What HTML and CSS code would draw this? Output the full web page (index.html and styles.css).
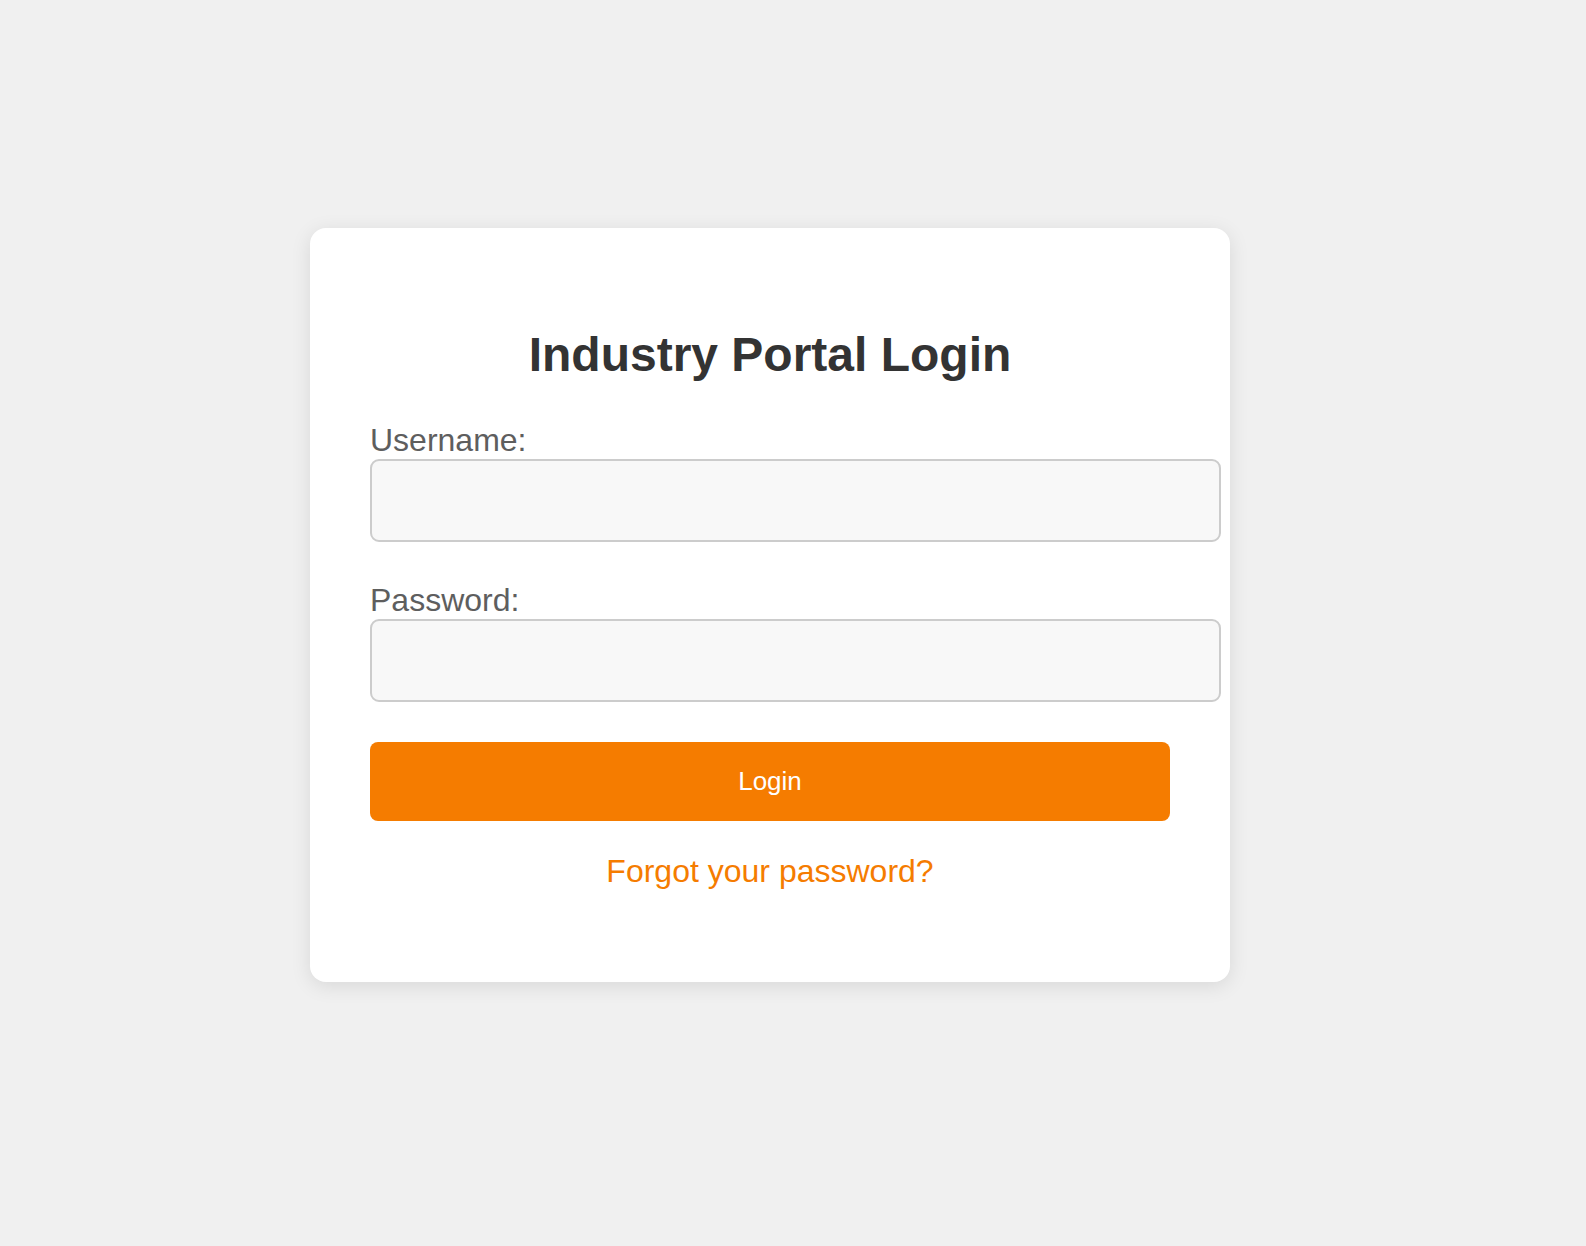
FILE: index.html
```html
<!DOCTYPE html>
<html lang="en">
<head>
<meta charset="utf-8">
<title>Industry Portal Login</title>
<link rel="stylesheet" href="styles.css">
</head>
<body>
<div class="page">
  <div class="login-card">
    <h2 class="title">Industry Portal Login</h2>
    <form class="login-form">
      <label class="field-label" for="username">Username:</label>
      <input class="field-input" type="text" id="username">
      <label class="field-label" for="password">Password:</label>
      <input class="field-input" type="password" id="password">
      <button class="login-btn" type="button">Login</button>
    </form>
    <p class="forgot"><a href="#" class="forgot-link">Forgot your password?</a></p>
  </div>
</div>
</body>
</html>
```
FILE: styles.css
```css
html, body {
  margin: 0;
  padding: 0;
  background: #f0f0f0;
  font-family: "Liberation Sans", Arial, sans-serif;
}

.page {
  display: flex;
  justify-content: center;
  align-items: flex-start;
  padding: 228px 46px 0 0;
  min-height: 1018px;
}

.login-card {
  width: 800px;
  padding: 60px;
  background: #ffffff;
  border-radius: 16px;
  box-shadow: 0 4px 20px rgba(0, 0, 0, 0.1);
}

.title {
  margin: 38px 0 39px;
  font-size: 48px;
  line-height: 57px;
  font-weight: bold;
  color: #333333;
  text-align: center;
}

.login-form {
  display: block;
}

.field-label {
  display: block;
  font-size: 32px;
  color: #5e5e5e;
  line-height: 37px;
}

.field-input {
  display: block;
  width: 100%;
  height: 31px;
  padding: 24px 23.5px;
  margin: 0 0 40px;
  border: 2px solid #cccccc;
  border-radius: 9px;
  background: #f8f8f8;
  font-family: "Liberation Sans", Arial, sans-serif;
  font-size: 25.6px;
  outline: none;
}

.login-btn {
  display: block;
  width: 100%;
  margin-top: 40px;
  padding: 0;
  height: 79px;
  border: none;
  border-radius: 8px;
  background: #f57c00;
  color: #ffffff;
  font-family: "Liberation Sans", Arial, sans-serif;
  font-size: 26px;
  cursor: pointer;
}

.forgot {
  margin: 32px 0 32px;
  text-align: center;
  font-size: 32px;
  line-height: 37px;
}

.forgot-link {
  color: #f57c00;
  text-decoration: none;
}
```
